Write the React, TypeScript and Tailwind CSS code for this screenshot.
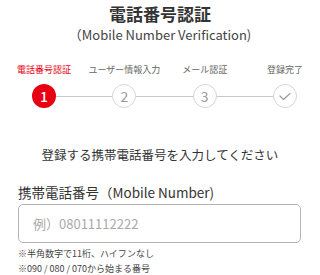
import React from "react";

const Circle = ({ children, active }: { children: React.ReactNode; active?: boolean }) => (
  <div
    className={
      active
        ? "w-[24px] h-[24px] rounded-full bg-[#e60012] text-white flex items-center justify-center text-[14px] font-medium shrink-0"
        : "w-[24px] h-[24px] rounded-full border border-[#d6d6d6] bg-white text-[#9a9a9a] flex items-center justify-center text-[14px] shrink-0"
    }
  >
    {children}
  </div>
);

const Line = () => <div className="flex-1 h-px bg-[#c8c8c8]" />;

const Label = ({ children, active }: { children: React.ReactNode; active?: boolean }) => (
  <div className="w-[24px] flex justify-center">
    <span className={"whitespace-nowrap text-[9px] leading-[12px] " + (active ? "text-[#e60012]" : "text-[#666]")}>
      {children}
    </span>
  </div>
);

export default function App() {
  return (
    <div
      className="w-[320px] h-[275px] overflow-hidden bg-white text-[#333]"
      style={{ fontFamily: '"Noto Sans CJK JP", "Noto Sans", sans-serif' }}
    >
      <div className="pt-[3px] text-center">
        <div className="text-[17px] leading-[22px] font-bold text-[#333]">電話番号認証</div>
        <div className="text-[13px] leading-[20px] text-[#444]">（Mobile Number Verification)</div>
      </div>

      <div className="ml-[32px] w-[265px] mt-[19px]">
        <div className="flex justify-between">
          <Label active>電話番号認証</Label>
          <Label>ユーザー情報入力</Label>
          <Label>メール認証</Label>
          <Label>登録完了</Label>
        </div>
        <div className="flex items-center mt-[8px]">
          <Circle active>1</Circle>
          <Line />
          <Circle>2</Circle>
          <Line />
          <Circle>3</Circle>
          <Line />
          <Circle>
            <svg width="12" height="9" viewBox="0 0 12 9" fill="none">
              <polyline points="1,4 4.5,7.5 11,1.5" stroke="#9a9a9a" strokeWidth="1.2" strokeLinecap="round" strokeLinejoin="round" />
            </svg>
          </Circle>
        </div>
      </div>

      <div className="mt-[38px] text-center text-[12.5px] leading-[18px] text-[#333]">
        登録する携帯電話番号を入力してください
      </div>

      <div className="mt-[18px] px-[18px]">
        <div className="text-[13.5px] leading-[20px] text-[#333]">携帯電話番号（Mobile Number)</div>
        <div className="mt-[2px] w-[283px] h-[39px] rounded-[5px] border border-[#b4b4b4] flex items-center pl-[14px]">
          <span className="text-[13px] text-[#aaa]">例）08011112222</span>
        </div>
        <div className="mt-[3px] text-[9px] leading-[15px] text-[#444]">
          <div>※半角数字で11桁、ハイフンなし</div>
          <div>※090 / 080 / 070から始まる番号</div>
        </div>
      </div>
    </div>
  );
}
